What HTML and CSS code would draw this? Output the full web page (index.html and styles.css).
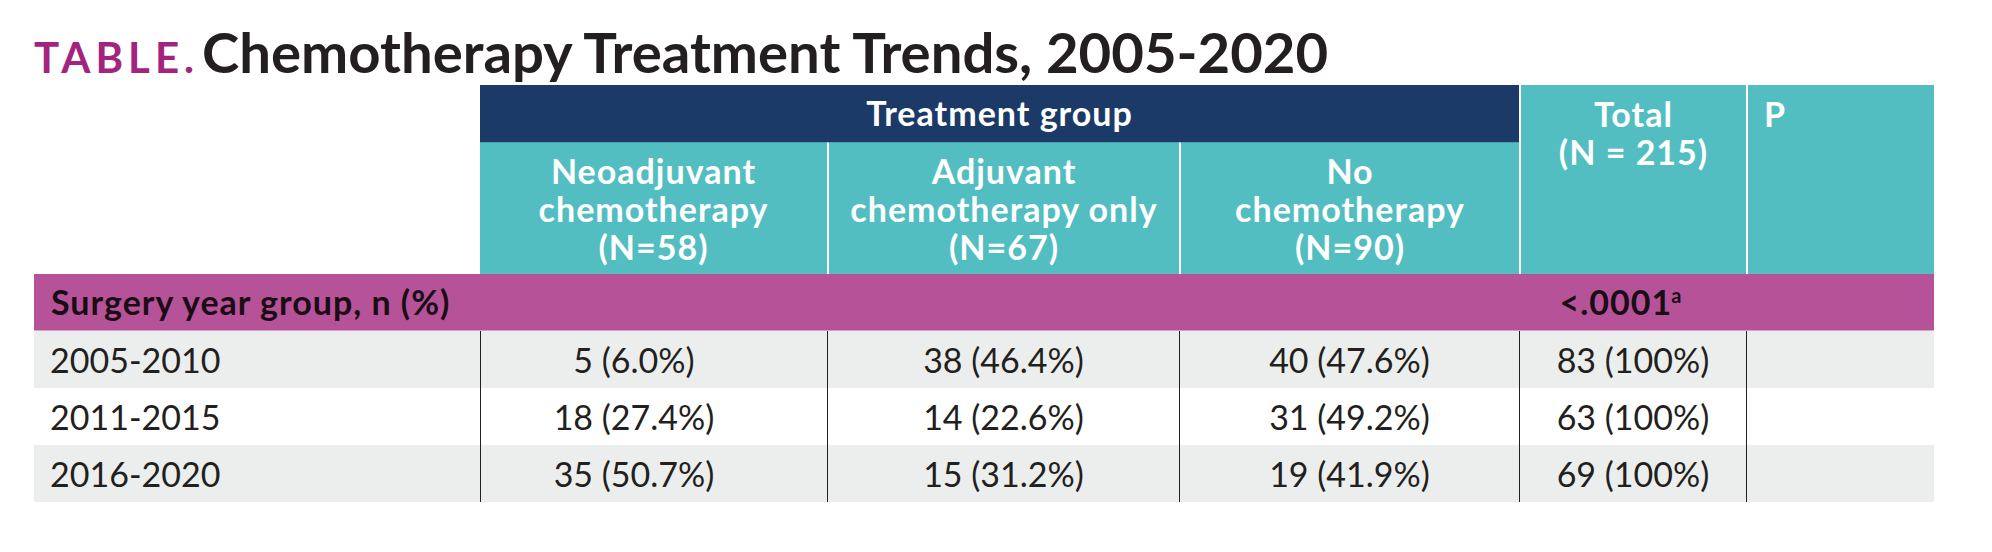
FILE: index.html
```html
<!DOCTYPE html>
<html lang="en">
<head>
<meta charset="utf-8">
<title>Chemotherapy Treatment Trends, 2005-2020</title>
<link rel="stylesheet" href="styles.css">
</head>
<body>
<div class="page">
  <h1 class="title"><span class="tag">TABLE.</span>Chemotherapy Treatment Trends, 2005-2020</h1>
  <div class="table">
    <div class="corner"></div>
    <div class="group">Treatment group</div>
    <div class="total">Total<br>(N = 215)</div>
    <div class="pcol">P</div>
    <div class="sub c2">Neoadjuvant<br>chemotherapy<br>(N=58)</div>
    <div class="sub c3 sep">Adjuvant<br>chemotherapy only<br>(N=67)</div>
    <div class="sub c4 sep">No<br>chemotherapy<br>(N=90)</div>

    <div class="section">Surgery year group, n (%)</div>
    <div class="section-p"><span>&lt;.0001<sup>a</sup></span></div>
    <div class="section-end"></div>

    <div class="cell label shade">2005-2010</div>
    <div class="cell num first shade">5 (6.0%)</div>
    <div class="cell num shade">38 (46.4%)</div>
    <div class="cell num shade">40 (47.6%)</div>
    <div class="cell num shade">83 (100%)</div>
    <div class="cell num shade"></div>

    <div class="cell label">2011-2015</div>
    <div class="cell num first">18 (27.4%)</div>
    <div class="cell num">14 (22.6%)</div>
    <div class="cell num">31 (49.2%)</div>
    <div class="cell num">63 (100%)</div>
    <div class="cell num"></div>

    <div class="cell label shade">2016-2020</div>
    <div class="cell num first shade">35 (50.7%)</div>
    <div class="cell num shade">15 (31.2%)</div>
    <div class="cell num shade">19 (41.9%)</div>
    <div class="cell num shade">69 (100%)</div>
    <div class="cell num shade"></div>
  </div>
</div>
</body>
</html>
```

FILE: styles.css
```css
* { box-sizing: border-box; }

html, body {
  margin: 0;
  padding: 0;
  background: #ffffff;
}

body {
  font-family: "Lato", "Open Sans", "Liberation Sans", sans-serif;
  color: #231f20;
}

.page {
  padding-left: 34px;
  width: 1992px;
}

.title {
  margin: 0;
  height: 85px;
  padding-top: 21px;
  font-size: 56.3px;
  line-height: 60px;
  font-weight: 700;
  color: #231f20;
  white-space: nowrap;
}

.tag {
  font-size: 42px;
  letter-spacing: 5px;
  color: #a3247f;
  margin-right: 3px;
}

.table {
  display: grid;
  width: 1900px;
  grid-template-columns: 446px 347px 352px 340px 227px 188px;
  grid-template-rows: 57px 132px 57px 57px 57px 57px;
}

.corner {
  grid-column: 1;
  grid-row: 1 / 3;
  background: #ffffff;
}

.group,
.total,
.pcol,
.sub,
.section,
.section-p {
  font-weight: 700;
  font-size: 34px;
  line-height: 38px;
  letter-spacing: 1px;
}

.group {
  grid-column: 2 / 5;
  grid-row: 1;
  background: #1b3a67;
  color: #ffffff;
  display: flex;
  align-items: center;
  justify-content: center;
  padding-bottom: 1px;
}

.total,
.pcol {
  grid-row: 1 / 3;
  background: #52bec1;
  color: #ffffff;
  padding-top: 10px;
  border-left: 2px solid #ffffff;
}

.total {
  grid-column: 5;
  text-align: center;
}

.pcol {
  grid-column: 6;
  padding-left: 16px;
}

.sub {
  grid-row: 2;
  background: #52bec1;
  color: #ffffff;
  text-align: center;
  display: flex;
  align-items: center;
  justify-content: center;
  border-top: 1px solid #4aa3b3;
}

.c2 { grid-column: 2; }
.c3 { grid-column: 3; }
.c4 { grid-column: 4; }

.sub.sep {
  border-left: 2px solid #ffffff;
}

.section,
.section-p,
.section-end {
  grid-row: 3;
  background: #b65398;
  border-bottom: 1px solid #d9a2c9;
  color: #1a0d16;
  display: flex;
  align-items: center;
}

.section {
  grid-column: 1 / 5;
  padding-left: 17px;
}

.section-p {
  grid-column: 5;
  justify-content: center;
  padding-right: 24px;
}

.section-end {
  grid-column: 6;
}

.section-p sup {
  font-size: 20px;
  line-height: 0;
  vertical-align: 12px;
  margin-left: -1px;
  letter-spacing: 0;
}

.cell {
  font-size: 34px;
  line-height: 38px;
  font-weight: 400;
  color: #231f20;
  display: flex;
  align-items: center;
  background: #ffffff;
}

.cell.shade {
  background: #eceeed;
}

.label {
  padding-left: 16px;
}

.num {
  justify-content: center;
  border-left: 1px solid #231f20;
}

.num.first {
  padding-right: 40px;
}
```
